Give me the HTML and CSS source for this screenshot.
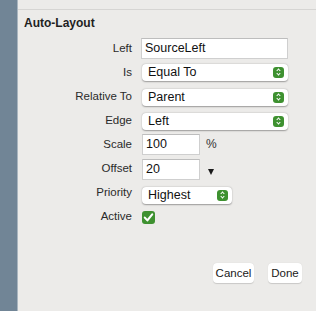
FILE: index.html
```html
<html lang="en">
  <head>
    <meta charset="UTF-8" />
    <meta name="viewport" content="width=device-width, initial-scale=1.0" />
    <link rel="stylesheet" href="styles.css">
    <title>Auto-Layout</title>
  </head>
  <body>
    <div class="window">
      <aside class="sidebar"></aside>

      <main class="panel">
        <div class="toolbar"></div>
        <h1>Auto-Layout</h1>

        <div class="form">
          <div class="row">
            <label>Left</label>
            <div class="field wide">SourceLeft</div>
          </div>
          <div class="row">
            <label>Is</label>
            <div class="popup wide">Equal To<span class="stepper"></span></div>
          </div>
          <div class="row">
            <label>Relative To</label>
            <div class="popup wide low">Parent<span class="stepper"></span></div>
          </div>
          <div class="row">
            <label>Edge</label>
            <div class="popup wide low">Left<span class="stepper"></span></div>
          </div>
          <div class="row">
            <label>Scale</label>
            <div class="field short">100</div>
            <span class="unit">%</span>
          </div>
          <div class="row">
            <label>Offset</label>
            <div class="field short low">20</div>
            <span class="arrow"></span>
          </div>
          <div class="row">
            <label>Priority</label>
            <div class="popup medium lower">Highest<span class="stepper"></span></div>
          </div>
          <div class="row">
            <label>Active</label>
            <span class="check">
              <svg width="13" height="13" viewBox="0 0 13 13">
                <path d="M2.8 6.6 L5.4 9.4 L10.2 3.4" fill="none" stroke="#fff" stroke-width="2.1" stroke-linecap="round" stroke-linejoin="round"/>
              </svg>
            </span>
          </div>
        </div>

        <div class="actions">
          <button class="btn cancel">Cancel</button>
          <button class="btn done">Done</button>
        </div>
      </main>
    </div>
  </body>
</html>
```

FILE: styles.css
```css
*,
*::after,
*::before {
  margin: 0;
  padding: 0;
  box-sizing: border-box;
}

body {
  font-family: "Liberation Sans", Arial, sans-serif;
  color: #222;
}

.window {
  display: flex;
  height: 311px;
}

.sidebar {
  width: 18px;
  background-color: #718596;
  border-right: 1px solid #a9b5bf;
}

.panel {
  flex: 1;
  background-color: #ecebe9;
}

.toolbar {
  height: 10px;
  border-bottom: 1px solid #d6d5d3;
}

.panel h1 {
  font-size: 12px;
  font-weight: bold;
  line-height: 14px;
  margin: 6px 0 6px 6px;
  color: #1f1f1f;
}

.row {
  display: flex;
  align-items: center;
  height: 24px;
}
.row label {
  width: 123px;
  padding-right: 9px;
  text-align: right;
  font-size: 11.5px;
  color: #2a2a2a;
}

.field {
  height: 21px;
  background: #fff;
  border: 1px solid #cfcfcf;
  border-top-color: #bdbdbd;
  font-size: 12.5px;
  line-height: 19px;
  padding-left: 3px;
  color: #111;
}
.field.wide {
  width: 147px;
}
.field.short {
  width: 58px;
  margin-left: 1px;
}

.popup {
  position: relative;
  height: 17px;
  margin-left: 1px;
  background: #fff;
  border-radius: 4px;
  box-shadow: 0 0.5px 1.5px rgba(0, 0, 0, 0.35);
  font-size: 12.5px;
  line-height: 17px;
  padding-left: 6px;
  color: #111;
}
.popup.wide {
  width: 146px;
}
.popup.medium {
  width: 90px;
}
.low {
  margin-top: 2px;
}
.lower {
  margin-top: 6px;
}

.stepper {
  position: absolute;
  right: 4px;
  top: 3px;
  width: 11px;
  height: 11px;
  border-radius: 3px;
  background-color: #3e9130;
}
.stepper::before,
.stepper::after {
  content: "";
  position: absolute;
  left: 3.5px;
  width: 3px;
  height: 3px;
  border: solid #fff;
  border-width: 1.2px 0 0 1.2px;
}
.stepper::before {
  top: 2.6px;
  transform: rotate(45deg);
}
.stepper::after {
  top: 5.2px;
  transform: rotate(225deg);
}

.unit {
  margin-left: 6px;
  font-size: 12px;
  color: #333;
}

.arrow {
  margin: 7px 0 0 8px;
  width: 0;
  height: 0;
  border-left: 3.5px solid transparent;
  border-right: 3.5px solid transparent;
  border-top: 6px solid #1a1a1a;
}

.check {
  display: flex;
  width: 13px;
  height: 13px;
  margin-left: 1px;
  margin-top: 3px;
  border-radius: 3px;
  background-color: #3e9130;
}

.actions {
  display: flex;
  justify-content: flex-end;
  gap: 14px;
  margin-top: 35px;
  padding-right: 14px;
}
.btn {
  height: 20px;
  border: none;
  border-radius: 4px;
  background: #fff;
  box-shadow: 0 0.5px 1px rgba(0, 0, 0, 0.15);
  font-family: "Liberation Sans", Arial, sans-serif;
  font-size: 11.5px;
  color: #1a1a1a;
}
.btn.cancel {
  width: 41px;
}
.btn.done {
  width: 34px;
}
```
